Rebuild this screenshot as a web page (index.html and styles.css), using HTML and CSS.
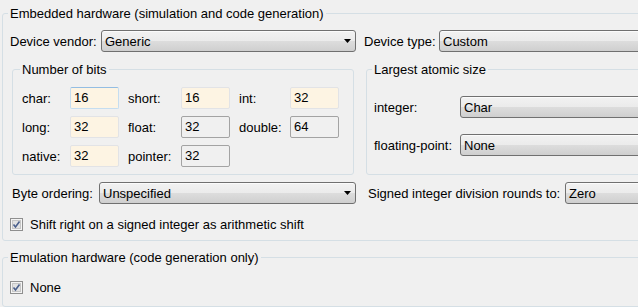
FILE: index.html
```html
<!DOCTYPE html>
<html lang="en">
  <head>
    <meta charset="UTF-8" />
    <title>Hardware Implementation</title>
    <link rel="stylesheet" href="styles.css">
  </head>
  <body>
    <fieldset class="group main">
      <legend>Embedded hardware (simulation and code generation)</legend>

      <div class="row">
        <div class="left">
          <span class="lbl vendor-lbl">Device vendor:</span>
          <div class="combo grow"><span>Generic</span>
            <svg class="arrow" width="7" height="4" viewBox="0 0 7 4"><path d="M0 0H7L3.5 4Z" fill="#000"/></svg>
          </div>
        </div>
        <div class="right">
          <span class="lbl type-lbl">Device type:</span>
          <div class="combo wide"><span>Custom</span></div>
        </div>
      </div>

      <div class="row boxes">
        <fieldset class="group bits">
          <legend>Number of bits</legend>
          <div class="bits-grid">
            <span>char:</span><div class="num focus">16</div>
            <span>short:</span><div class="num">16</div>
            <span>int:</span><div class="num">32</div>
            <span>long:</span><div class="num">32</div>
            <span>float:</span><div class="num ro">32</div>
            <span>double:</span><div class="num ro">64</div>
            <span>native:</span><div class="num">32</div>
            <span>pointer:</span><div class="num ro">32</div>
          </div>
        </fieldset>
        <fieldset class="group atomic">
          <legend>Largest atomic size</legend>
          <div class="atomic-grid">
            <span>integer:</span><div class="combo wide"><span>Char</span></div>
            <span>floating-point:</span><div class="combo wide"><span>None</span></div>
          </div>
        </fieldset>
      </div>

      <div class="row order">
        <div class="left">
          <span class="lbl byte-lbl">Byte ordering:</span>
          <div class="combo grow"><span>Unspecified</span>
            <svg class="arrow" width="7" height="4" viewBox="0 0 7 4"><path d="M0 0H7L3.5 4Z" fill="#000"/></svg>
          </div>
        </div>
        <div class="right">
          <span class="lbl div-lbl">Signed integer division rounds to:</span>
          <div class="combo wide"><span>Zero</span></div>
        </div>
      </div>

      <label class="check shift">
        <svg width="13" height="13" viewBox="0 0 13 13">
          <rect x="0.5" y="0.5" width="12" height="12" fill="#f4f4f4" stroke="#8f8f8f"/>
          <rect x="2.5" y="2.5" width="8" height="8" fill="#e2e2e2" stroke="#c6c6c6"/>
          <path d="M3.5 6.5L5.5 9L9.5 3.5" fill="none" stroke="#4a5f8c" stroke-width="1.6"/>
        </svg>
        <span>Shift right on a signed integer as arithmetic shift</span>
      </label>
    </fieldset>

    <fieldset class="group emu">
      <legend>Emulation hardware (code generation only)</legend>
      <label class="check">
        <svg width="13" height="13" viewBox="0 0 13 13">
          <rect x="0.5" y="0.5" width="12" height="12" fill="#f4f4f4" stroke="#8f8f8f"/>
          <rect x="2.5" y="2.5" width="8" height="8" fill="#e2e2e2" stroke="#c6c6c6"/>
          <path d="M3.5 6.5L5.5 9L9.5 3.5" fill="none" stroke="#4a5f8c" stroke-width="1.6"/>
        </svg>
        <span>None</span>
      </label>
    </fieldset>
  </body>
</html>
```

FILE: styles.css
```css
body {
  margin: 0;
  width: 638px;
  height: 307px;
  overflow: hidden;
  background-color: #f0f0f0;
  font-family: "Liberation Sans", Arial, sans-serif;
  font-size: 13px;
  color: #000;
}

.group {
  margin: 0;
  border: 1px solid #d5dfe5;
  border-radius: 3px;
  min-width: 0;
}
.group legend {
  padding: 0 2px;
  margin-left: -2px;
  line-height: 15px;
}

.main {
  margin: 6px 0 0 2px;
  width: 700px;
  padding: 9px 0 8px 7px;
}
.emu {
  margin: 9px 0 0 2px;
  width: 700px;
  padding: 15px 0 11px 7px;
}

.row {
  display: flex;
}
.left {
  display: flex;
  flex: none;
  align-items: center;
  width: 346px;
}
.right {
  display: flex;
  flex: none;
  align-items: center;
  margin-left: 8px;
}
.lbl {
  white-space: nowrap;
}
.vendor-lbl { width: 91px; }
.type-lbl { width: 75px; }
.byte-lbl { width: 87px; margin-left: 2px; }
.div-lbl { width: 197px; margin-left: 4px; }

.combo {
  position: relative;
  box-sizing: border-box;
  height: 22px;
  border: 1px solid #707070;
  border-radius: 3px;
  background: linear-gradient(#f2f2f2 0%, #ebebeb 50%, #dddddd 50%, #cfcfcf 100%);
  box-shadow: inset 0 1px 0 #fbfbfb;
  display: flex;
  align-items: center;
  padding-left: 3px;
}
.grow { flex: 1; }
.wide { width: 260px; }
.combo .arrow {
  position: absolute;
  right: 4px;
  top: 8px;
}

.boxes {
  margin: 10px 0 0 2px;
}
.bits {
  width: 342px;
  box-sizing: border-box;
  padding: 10px 0 7px 9px;
}
.atomic {
  width: 300px;
  margin-left: 12px;
  padding: 19px 0 7px 7px;
}

.bits-grid {
  display: grid;
  grid-template-columns: 48px 58px 53px 58px 51px 49px;
  grid-auto-rows: 22px;
  row-gap: 7px;
  align-items: center;
}
.num {
  box-sizing: border-box;
  width: 49px;
  height: 22px;
  line-height: 20px;
  padding-left: 3px;
  background-color: #fdf4e3;
  border: 1px solid #e2e3e6;
  border-radius: 2px;
}
.num.focus {
  border-color: #c5ddf0;
  border-top-color: #93bde3;
}
.num.ro {
  background-color: #f0f0f0;
  border-color: #a3a3a3;
}

.atomic-grid {
  display: grid;
  grid-template-columns: 86px 260px;
  grid-auto-rows: 22px;
  row-gap: 16px;
  align-items: center;
}

.order {
  margin-top: 7px;
}

.check {
  display: flex;
  align-items: center;
  gap: 7px;
  height: 15px;
}
.check svg {
  flex: none;
}
.shift {
  margin-top: 13px;
}
```
